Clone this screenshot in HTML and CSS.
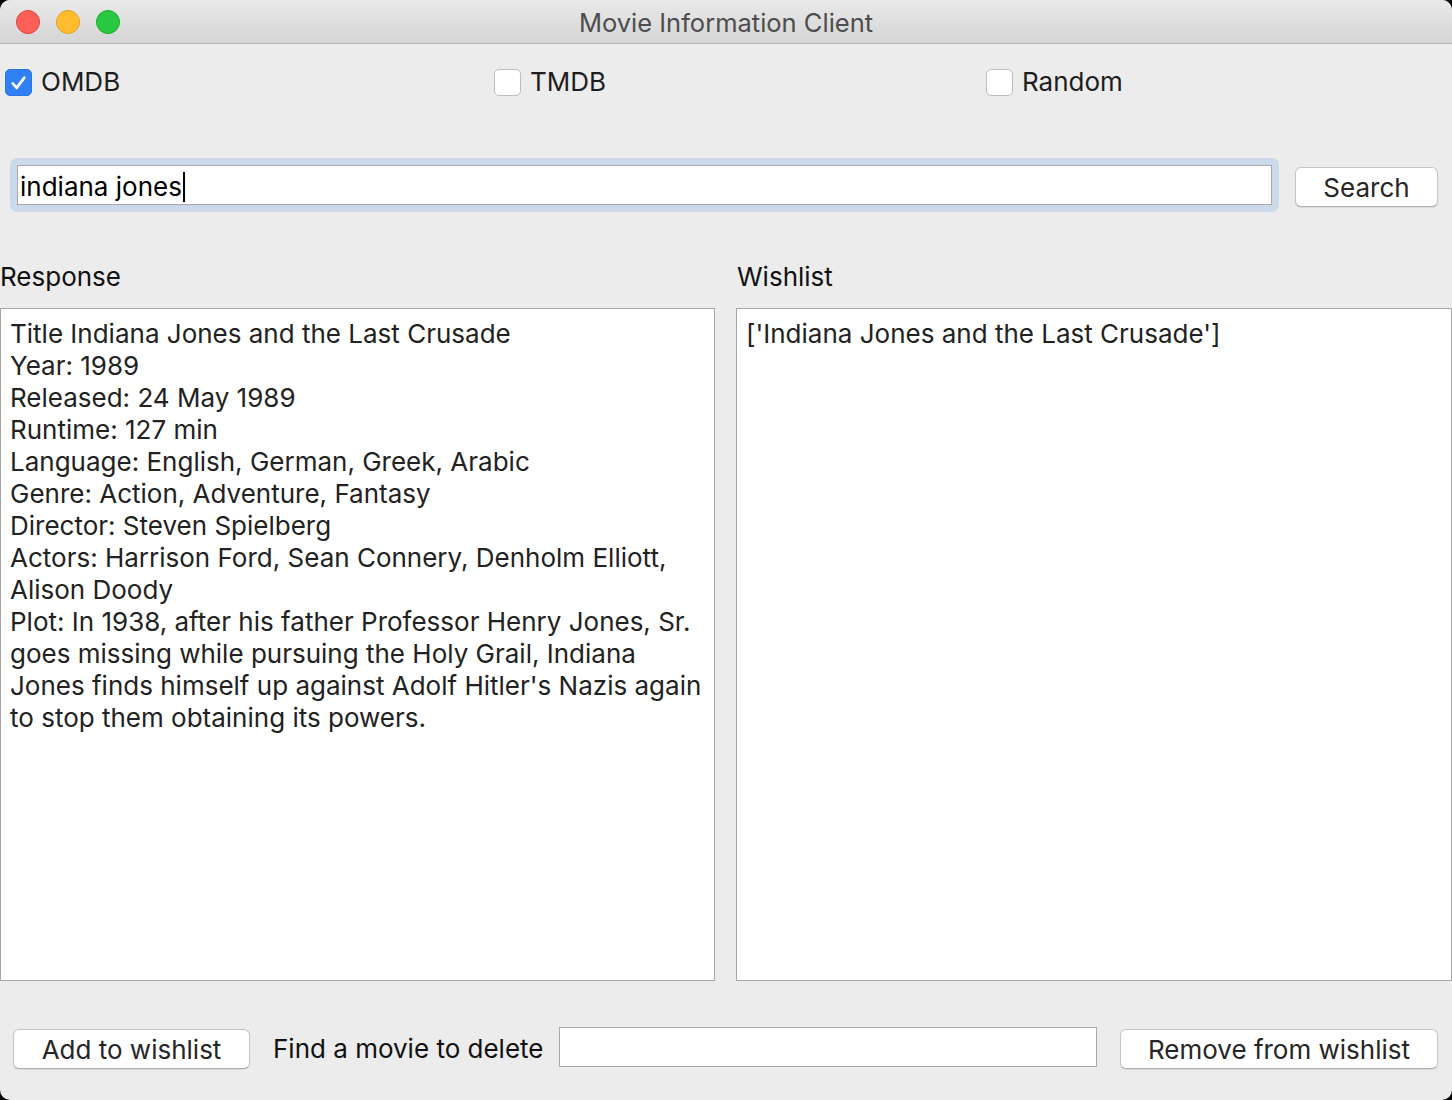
FILE: index.html
```html
<!DOCTYPE html>
<html>
<head>
<meta charset="utf-8">
<title>Movie Information Client</title>
<link rel="stylesheet" href="styles.css">
</head>
<body>
<div class="window">
  <div class="titlebar">
    <div class="lights">
      <span class="light red"></span>
      <span class="light yellow"></span>
      <span class="light green"></span>
    </div>
    <div class="title">Movie Information Client</div>
    <div></div>
  </div>
  <div class="content">
    <div class="checks">
      <label class="check"><span class="box checked"><svg viewBox="0 0 28 28" width="28" height="28"><path d="M7.5 14.5 L12 19.5 L20.5 8" fill="none" stroke="#fff" stroke-width="3" stroke-linecap="round" stroke-linejoin="round"/></svg></span><span class="check-label">OMDB</span></label>
      <label class="check"><span class="box"></span><span class="check-label">TMDB</span></label>
      <label class="check"><span class="box"></span><span class="check-label">Random</span></label>
    </div>
    <div class="search-row">
      <div class="focus-ring"><div class="input main-input">indiana jones<span class="caret"></span></div></div>
      <div class="button search-btn">Search</div>
    </div>
    <div class="panels">
      <div class="panel-col">
        <div class="panel-label">Response</div>
        <div class="panel">
          <div>Title Indiana Jones and the Last Crusade</div>
          <div>Year: 1989</div>
          <div>Released: 24 May 1989</div>
          <div>Runtime: 127 min</div>
          <div>Language: English, German, Greek, Arabic</div>
          <div>Genre: Action, Adventure, Fantasy</div>
          <div>Director: Steven Spielberg</div>
          <div>Actors: Harrison Ford, Sean Connery, Denholm Elliott,</div>
          <div>Alison Doody</div>
          <div>Plot: In 1938, after his father Professor Henry Jones, Sr.</div>
          <div>goes missing while pursuing the Holy Grail, Indiana</div>
          <div>Jones finds himself up against Adolf Hitler's Nazis again</div>
          <div>to stop them obtaining its powers.</div>
        </div>
      </div>
      <div class="panel-col right">
        <div class="panel-label">Wishlist</div>
        <div class="panel">
          <div>['Indiana Jones and the Last Crusade']</div>
        </div>
      </div>
    </div>
    <div class="bottom-row">
      <div class="button add-btn">Add to wishlist</div>
      <div class="find-label">Find a movie to delete</div>
      <div class="input delete-input"></div>
      <div class="button remove-btn">Remove from wishlist</div>
    </div>
  </div>
</div>
</body>
</html>
```
FILE: styles.css
```css
html, body {
  margin: 0;
  padding: 0;
  background: #000;
}
body {
  font-family: Inter, "Liberation Sans", sans-serif;
  color: #1d1d1d;
}
.window {
  width: 1452px;
  height: 1100px;
  background: #ececec;
  border-radius: 10px;
  overflow: hidden;
  display: flex;
  flex-direction: column;
}
.titlebar {
  height: 43px;
  border-bottom: 1px solid #b7b7b7;
  background: linear-gradient(#e9e9e9, #d5d5d5);
  display: grid;
  grid-template-columns: 1fr auto 1fr;
  align-items: center;
}
.lights {
  display: flex;
  gap: 16px;
  padding-left: 16px;
}
.light {
  width: 24px;
  height: 24px;
  border-radius: 50%;
  box-sizing: border-box;
}
.red { background: #fe5f57; border: 1px solid #e0443e; }
.yellow { background: #febc2e; border: 1px solid #dea123; }
.green { background: #28c840; border: 1px solid #1aab29; }
.title {
  font-size: 25.5px;
  color: #4d4d4d;
  padding-top: 1px;
}
.content {
  display: flex;
  flex-direction: column;
  flex: 1;
}
.checks {
  display: grid;
  grid-template-columns: 489px 492px 1fr;
  padding-left: 5px;
  margin-top: 24px;
  height: 28px;
}
.check {
  display: flex;
  align-items: center;
  gap: 9px;
  font-size: 26px;
  color: #1d1d1d;
}
.check-label {
  margin-top: -2px;
}
.box {
  width: 27px;
  height: 27px;
  box-sizing: border-box;
  border-radius: 5px;
  background: #fff;
  border: 1px solid #bdbdbd;
  display: flex;
  align-items: center;
  justify-content: center;
}
.box.checked {
  background: #2f7ff5;
  border-color: #2a74e6;
}
.box svg { display: block; }
.search-row {
  display: flex;
  align-items: center;
  margin-top: 62px;
  padding-left: 10px;
  padding-right: 14px;
}
.focus-ring {
  width: 1269px;
  height: 54px;
  box-sizing: border-box;
  padding: 7px;
  background: #cbd9ea;
  border-radius: 7px;
}
.input {
  background: #fff;
  border: 1px solid #a9a9a9;
  box-sizing: border-box;
}
.main-input {
  height: 40px;
  font-size: 26px;
  color: #000;
  padding-left: 2px;
  padding-top: 3px;
  line-height: 34px;
  display: flex;
  align-items: center;
}
.caret {
  display: inline-block;
  width: 2px;
  height: 30px;
  background: #000;
  margin-left: 1px;
}
.button {
  background: #fff;
  border: 1px solid #c4c4c4;
  border-bottom-color: #acacac;
  border-radius: 6px;
  box-sizing: border-box;
  height: 40px;
  font-size: 26px;
  color: #262626;
  display: flex;
  align-items: center;
  justify-content: center;
  box-shadow: 0 1px 1px rgba(0,0,0,0.08);
}
.search-btn {
  width: 143px;
  margin-left: 16px;
  margin-top: 4px;
}
.panels {
  display: flex;
  gap: 21px;
  margin-top: 49px;
}
.panel-col {
  width: 715px;
  display: flex;
  flex-direction: column;
}
.panel-col.right {
  width: 716px;
}
.panel-label {
  font-size: 26px;
  line-height: 32px;
  height: 47px;
  color: #111;
}
.right .panel-label { padding-left: 1px; }
.panel {
  height: 673px;
  box-sizing: border-box;
  background: #fff;
  border: 1px solid #a6a6a6;
  padding: 9px 9px;
  font-size: 26px;
  line-height: 32px;
  color: #222;
  white-space: nowrap;
}
.bottom-row {
  display: flex;
  align-items: flex-start;
  margin-top: 46px;
  padding-left: 13px;
}
.add-btn {
  width: 237px;
  margin-top: 2px;
}
.find-label {
  width: 268px;
  margin-left: 23px;
  margin-top: 2px;
  height: 40px;
  line-height: 40px;
  font-size: 26px;
  color: #111;
  white-space: nowrap;
}
.delete-input {
  width: 538px;
  height: 40px;
  margin-left: 18px;
}
.remove-btn {
  width: 318px;
  margin-left: 23px;
  margin-top: 2px;
}
```
